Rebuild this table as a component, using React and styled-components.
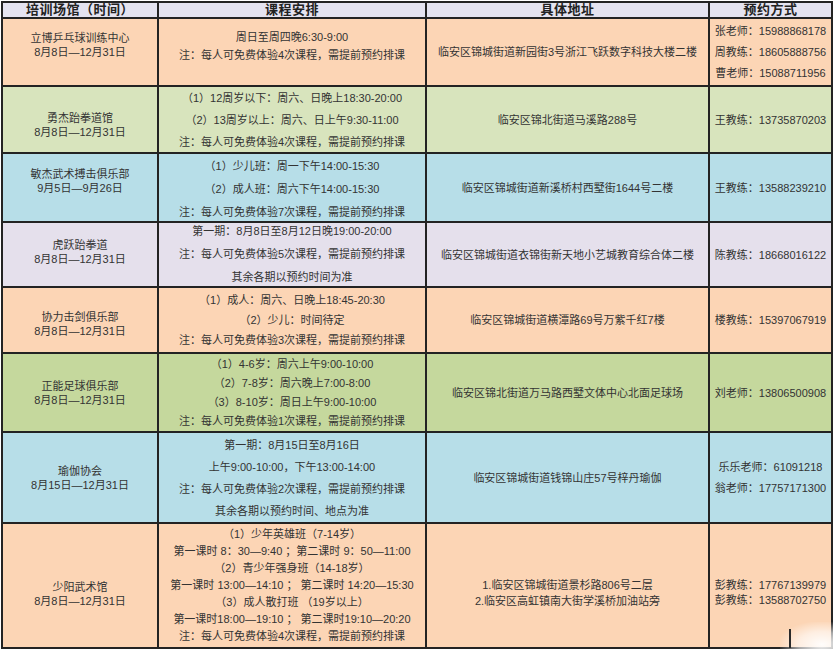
import React from "react";
import styled, { createGlobalStyle } from "styled-components";

const GlobalStyle = createGlobalStyle`
  html, body {
    margin: 0;
    padding: 0;
    background: #ffffff;
  }
  body {
    font-family: "Liberation Sans", "Noto Sans CJK SC", sans-serif;
    color: #333;
  }
`;

const Page = styled.div`
  position: relative;
  width: 836px;
  height: 654px;
  padding: 1px 0 0 1px;
  box-sizing: border-box;
`;

const Grid = styled.div`
  display: grid;
  grid-template-columns: 156px 268px 283px 123px;
  grid-template-rows: 16px 68px 67px 69px 65px 66px 79px 91px 125px;
  border-left: 2px solid #232323;
  border-top: 2px solid #232323;
  width: max-content;
`;

const Cell = styled.div`
  box-sizing: border-box;
  border-right: 2px solid #232323;
  border-bottom: 2px solid #232323;
  background: ${(p) => p.$bg};
  display: flex;
  flex-direction: column;
  justify-content: center;
  align-items: center;
  text-align: center;
  font-size: 11px;
  line-height: ${(p) => p.$lh || 14}px;
  white-space: nowrap;
  overflow: hidden;
  padding: ${(p) =>
    p.$shift > 0 ? `${p.$shift * 2}px 0 0` : p.$shift < 0 ? `0 0 ${-p.$shift * 2}px` : "0"};
`;

const HeadCell = styled(Cell)`
  background: #e4e3f0;
  font-size: 13px;
  font-weight: bold;
  line-height: 14px;
  color: #222;
  letter-spacing: 0.5px;
`;

const Line = styled.div`
  display: block;
`;

const Cursor = styled.div`
  position: absolute;
  left: 780px;
  top: 622px;
  width: 60px;
  height: 32px;
  background: radial-gradient(ellipse at 70% 70%, rgba(255, 255, 255, 0.95) 0%, rgba(255, 255, 255, 0.6) 40%, rgba(255, 255, 255, 0) 75%);

  &::before {
    content: "";
    position: absolute;
    left: 9px;
    top: 7px;
    width: 2px;
    height: 19px;
    background: #2a2a2a;
  }
`;

const PEACH = "#fcd5b5";
const GREEN = "#d8e4bd";
const GREEN2 = "#c5d89d";
const BLUE = "#b7dee8";
const LAVENDER = "#e5e0ec";

const rows = [
  {
    bg: PEACH,
    venue: ["立博乒乓球训练中心", "8月8日—12月31日"],
    vShift: -7,
    lh: 18,
    cShift: -6,
    course: ["周日至周四晚6:30-9:00", "注：每人可免费体验4次课程，需提前预约排课"],
    addr: ["临安区锦城街道新园街3号浙江飞跃数字科技大楼二楼"],
    contact: ["张老师：15988868178", "周教练：18605888756", "曹老师：15088711956"],
    kLh: 21,
  },
  {
    bg: GREEN,
    venue: ["勇杰跆拳道馆", "8月8日—12月31日"],
    vShift: 5,
    lh: 22,
    course: [
      "（1）12周岁以下：周六、日晚上18:30-20:00",
      "（2）13周岁以上：周六、日上午9:30-11:00",
      "注：每人可免费体验4次课程，需提前预约排课",
    ],
    addr: ["临安区锦北街道马溪路288号"],
    contact: ["王教练：13735870203"],
  },
  {
    bg: BLUE,
    venue: ["敏杰武术搏击俱乐部", "9月5日—9月26日"],
    vShift: -7,
    lh: 23,
    cShift: 2,
    course: [
      "（1）少儿班：周一下午14:00-15:30",
      "（2）成人班：周六下午14:00-15:30",
      "注：每人可免费体验7次课程，需提前预约排课",
    ],
    addr: ["临安区锦城街道新溪桥村西墅街1644号二楼"],
    contact: ["王教练：13588239210"],
  },
  {
    bg: LAVENDER,
    venue: ["虎跃跆拳道", "8月8日—12月31日"],
    vShift: -3,
    lh: 23,
    course: [
      "第一期：8月8日至8月12日晚19:00-20:00",
      "注：每人可免费体验5次课程，需提前预约排课",
      "其余各期以预约时间为准",
    ],
    addr: ["临安区锦城街道衣锦街新天地小艺城教育综合体二楼"],
    contact: ["陈教练：18668016122"],
  },
  {
    bg: PEACH,
    venue: ["协力击剑俱乐部", "8月8日—12月31日"],
    vShift: 4,
    lh: 20,
    course: [
      "（1）成人：周六、日晚上18:45-20:30",
      "（2）少儿：时间待定",
      "注：每人可免费体验3次课程，需提前预约排课",
    ],
    addr: ["临安区锦城街道横潭路69号万紫千红7楼"],
    contact: ["楼教练：15397067919"],
  },
  {
    bg: GREEN2,
    venue: ["正能足球俱乐部", "8月8日—12月31日"],
    lh: 19,
    course: [
      "（1）4-6岁：周六上午9:00-10:00",
      "（2）7-8岁：周六晚上7:00-8:00",
      "（3）8-10岁：周日上午9:00-10:00",
      "注：每人可免费体验1次课程，需提前预约排课",
    ],
    addr: ["临安区锦北街道万马路西墅文体中心北面足球场"],
    contact: ["刘老师：13806500908"],
  },
  {
    bg: BLUE,
    venue: ["瑜伽协会", "8月15日—12月31日"],
    lh: 22,
    course: [
      "第一期：8月15日至8月16日",
      "上午9:00-10:00，下午13:00-14:00",
      "注：每人可免费体验2次课程，需提前预约排课",
      "其余各期以预约时间、地点为准",
    ],
    addr: ["临安区锦城街道钱锦山庄57号梓丹瑜伽"],
    contact: ["乐乐老师：61091218", "翁老师：17757171300"],
    kLh: 21,
  },
  {
    bg: PEACH,
    venue: ["少阳武术馆", "8月8日—12月31日"],
    vShift: 8,
    aShift: 7,
    lh: 17,
    course: [
      "（1）少年英雄班（7-14岁）",
      "第一课时 8：30—9:40 ；第二课时 9：50—11:00",
      "（2）青少年强身班（14-18岁）",
      "第一课时 13:00—14:10 ； 第二课时 14:20—15:30",
      "（3）成人散打班 （19岁以上）",
      "第一课时18:00—19:10 ； 第二课时19:10—20:20",
      "注：每人可免费体验4次课程，需提前预约排课",
    ],
    addr: ["1.临安区锦城街道景杉路806号二层", "2.临安区高虹镇南大街学溪桥加油站旁"],
    aLh: 16,
    contact: ["彭教练：17767139979", "彭教练：13588702750"],
    kLh: 15,
  },
];

const Lines = ({ items }) => items.map((t, i) => <Line key={i}>{t}</Line>);

export default function App() {
  return (
    <>
      <GlobalStyle />
      <Page>
        <Grid>
          <HeadCell>培训场馆（时间）</HeadCell>
          <HeadCell>课程安排</HeadCell>
          <HeadCell>具体地址</HeadCell>
          <HeadCell>预约方式</HeadCell>
          {rows.map((r, i) => (
            <React.Fragment key={i}>
              <Cell $bg={r.bg} $shift={r.vShift || 0} $lh={14}>
                <Lines items={r.venue} />
              </Cell>
              <Cell $bg={r.bg} $shift={r.cShift || 0} $lh={r.lh}>
                <Lines items={r.course} />
              </Cell>
              <Cell $bg={r.bg} $shift={r.aShift || 0} $lh={r.aLh || 14}>
                <Lines items={r.addr} />
              </Cell>
              <Cell $bg={r.bg} $shift={r.aShift || 0} $lh={r.kLh || 14}>
                <Lines items={r.contact} />
              </Cell>
            </React.Fragment>
          ))}
        </Grid>
        <Cursor />
      </Page>
    </>
  );
}
